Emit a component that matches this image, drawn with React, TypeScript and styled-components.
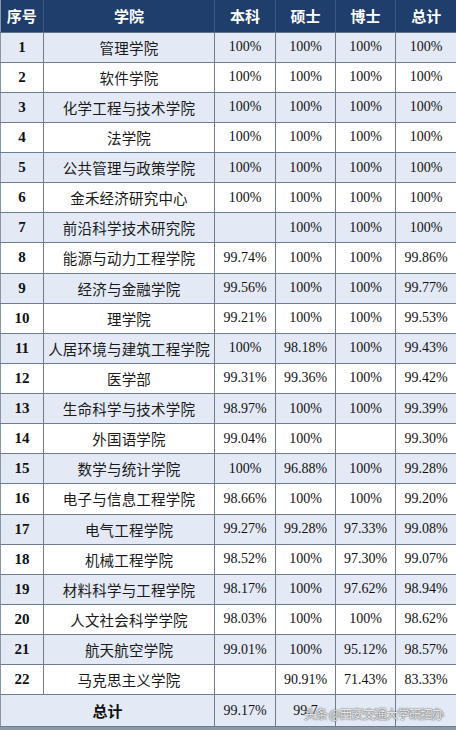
import styled, { createGlobalStyle } from "styled-components"

const GlobalStyle = createGlobalStyle`
	html, body {
		margin: 0;
		padding: 0;
		background: #ffffff;
	}
`

// one row of the table: index, college, then the four rates
type Row = [string, string, string, string, string, string]

const rows: Row[] = [
	["1", "管理学院", "100%", "100%", "100%", "100%"],
	["2", "软件学院", "100%", "100%", "100%", "100%"],
	["3", "化学工程与技术学院", "100%", "100%", "100%", "100%"],
	["4", "法学院", "100%", "100%", "100%", "100%"],
	["5", "公共管理与政策学院", "100%", "100%", "100%", "100%"],
	["6", "金禾经济研究中心", "100%", "100%", "100%", "100%"],
	["7", "前沿科学技术研究院", "", "100%", "100%", "100%"],
	["8", "能源与动力工程学院", "99.74%", "100%", "100%", "99.86%"],
	["9", "经济与金融学院", "99.56%", "100%", "100%", "99.77%"],
	["10", "理学院", "99.21%", "100%", "100%", "99.53%"],
	["11", "人居环境与建筑工程学院", "100%", "98.18%", "100%", "99.43%"],
	["12", "医学部", "99.31%", "99.36%", "100%", "99.42%"],
	["13", "生命科学与技术学院", "98.97%", "100%", "100%", "99.39%"],
	["14", "外国语学院", "99.04%", "100%", "", "99.30%"],
	["15", "数学与统计学院", "100%", "96.88%", "100%", "99.28%"],
	["16", "电子与信息工程学院", "98.66%", "100%", "100%", "99.20%"],
	["17", "电气工程学院", "99.27%", "99.28%", "97.33%", "99.08%"],
	["18", "机械工程学院", "98.52%", "100%", "97.30%", "99.07%"],
	["19", "材料科学与工程学院", "98.17%", "100%", "97.62%", "98.94%"],
	["20", "人文社会科学学院", "98.03%", "100%", "100%", "98.62%"],
	["21", "航天航空学院", "99.01%", "100%", "95.12%", "98.57%"],
	["22", "马克思主义学院", "", "90.91%", "71.43%", "83.33%"],
]

const Page = styled.div`
	position: relative;
	width: 456px;
	height: 730px;
	overflow: hidden;
	background: #8a98a8;
`

const Table = styled.table`
	width: 456px;
	table-layout: fixed;
	border-collapse: collapse;
`

const HeadRow = styled.tr`
	height: 32px;
	background: #1f3e6c;
`

const HeadCell = styled.th`
	padding: 0;
	color: #ffffff;
	font-family: "Noto Sans CJK SC", sans-serif;
	font-weight: 700;
	font-size: 15px;
	text-align: center;
	border-right: 1px solid #3d5a84;
	border-bottom: 1px solid #5f7088;
	&:last-child {
		border-right: none;
	}
`

const BodyRow = styled.tr<{ $alt: boolean; $h?: number }>`
	height: ${(p) => p.$h ?? 30.14}px;
	background: ${(p) => (p.$alt ? "#e4eaf5" : "#ffffff")};
`

const Cell = styled.td`
	padding: 0;
	text-align: center;
	border: 1px solid #6f7e8e;
	color: #111111;
	font-family: "Liberation Serif", "Times New Roman", serif;
	font-size: 14px;
	white-space: nowrap;
	overflow: hidden;
	&:first-child {
		border-left: 1px solid #8696a8;
	}
	&:last-child {
		border-right: 1px solid #8696a8;
	}
`

const IndexCell = styled(Cell)`
	font-weight: 700;
	font-size: 15px;
`

const NameCell = styled(Cell)`
	font-family: "Noto Sans CJK SC", sans-serif;
	font-size: 14.5px;
	letter-spacing: 0.2px;
	color: #1a1a1a;
`

const TotalLabel = styled(Cell)`
	font-family: "Noto Sans CJK SC", sans-serif;
	font-weight: 700;
	font-size: 15px;
`

// watermark stamped over the bottom right of the picture
const Watermark = styled.div`
	position: absolute;
	left: 304px;
	top: 704px;
	font-family: "Noto Sans CJK SC", sans-serif;
	font-size: 12.5px;
	color: rgba(255, 255, 255, 0.85);
	text-shadow: 0 0 1px #555, 0 0 2px #666;
	white-space: nowrap;
	letter-spacing: -1px;
`

export default function App() {
	return (
		<Page>
			<GlobalStyle />
			<Table>
				<colgroup>
					<col style={{ width: 43 }} />
					<col style={{ width: 171 }} />
					<col style={{ width: 61 }} />
					<col style={{ width: 60 }} />
					<col style={{ width: 60 }} />
					<col style={{ width: 61 }} />
				</colgroup>
				<thead>
					<HeadRow>
						<HeadCell>序号</HeadCell>
						<HeadCell>学院</HeadCell>
						<HeadCell>本科</HeadCell>
						<HeadCell>硕士</HeadCell>
						<HeadCell>博士</HeadCell>
						<HeadCell>总计</HeadCell>
					</HeadRow>
				</thead>
				<tbody>
					{rows.map((r, i) => (
						<BodyRow key={r[0]} $alt={i % 2 === 0}>
							<IndexCell>{r[0]}</IndexCell>
							<NameCell>{r[1]}</NameCell>
							<Cell>{r[2]}</Cell>
							<Cell>{r[3]}</Cell>
							<Cell>{r[4]}</Cell>
							<Cell>{r[5]}</Cell>
						</BodyRow>
					))}
					<BodyRow $alt={true} $h={32}>
						<TotalLabel colSpan={2}>总计</TotalLabel>
						<Cell>99.17%</Cell>
						<Cell>99.7</Cell>
						<Cell></Cell>
						<Cell></Cell>
					</BodyRow>
				</tbody>
			</Table>
			<Watermark>头条 @西安交通大学研招办</Watermark>
		</Page>
	)
}
